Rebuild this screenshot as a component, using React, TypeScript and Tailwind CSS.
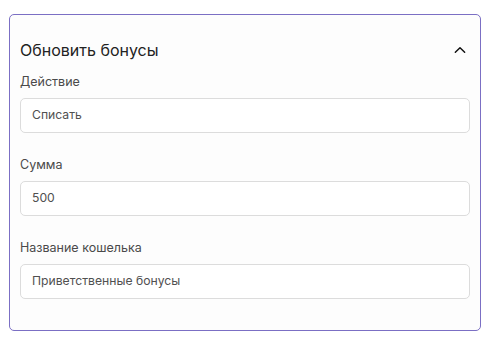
import React from 'react';

const fields = [
  { label: 'Действие', value: 'Списать' },
  { label: 'Сумма', value: '500' },
  { label: 'Название кошелька', value: 'Приветственные бонусы' },
];

const App: React.FC = () => {
  return (
    <div className="min-h-screen bg-white pt-[14px] pl-[9px] font-['Inter',sans-serif]">
      <div className="w-[472px] h-[317px] rounded-[5px] border border-[#7b6fc4] bg-[#fdfdfd] px-[10px] pt-[25px]">
        <div className="flex items-center justify-between h-[20px]">
          <h2 className="text-[16px] leading-[20px] text-[#222] font-normal">Обновить бонусы</h2>
          <svg width="16" height="16" viewBox="0 0 24 24" fill="none" stroke="#111" strokeWidth="2.2" strokeLinecap="round" strokeLinejoin="round" className="mr-[2px]">
            <path d="M5 15.5l7-7 7 7" />
          </svg>
        </div>
        <div className="mt-[14px] flex flex-col gap-[24px]">
          {fields.map((f) => (
            <div key={f.label}>
              <div className="text-[12.5px] leading-[16px] text-[#4a4a4a] font-normal">{f.label}</div>
              <div className="mt-[8px] h-[35px] rounded-[5px] border border-[#dcdcdc] bg-white flex items-center px-[11px]">
                <span className="text-[12.2px] text-[#505050]">{f.value}</span>
              </div>
            </div>
          ))}
        </div>
      </div>
    </div>
  );
};

export default App;
